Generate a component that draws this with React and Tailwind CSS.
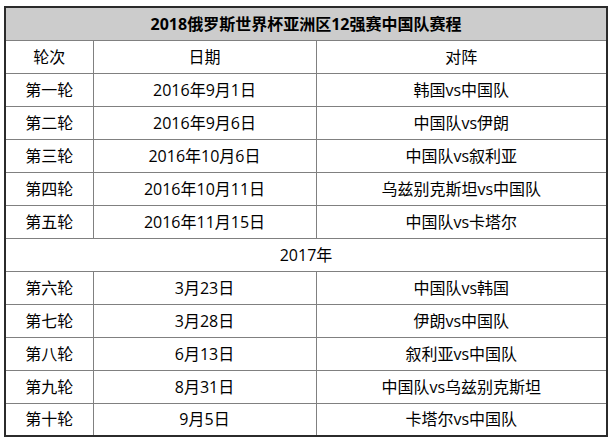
import React from "react";

const rounds1 = [
  ["第一轮", "2016年9月1日", "韩国vs中国队"],
  ["第二轮", "2016年9月6日", "中国队vs伊朗"],
  ["第三轮", "2016年10月6日", "中国队vs叙利亚"],
  ["第四轮", "2016年10月11日", "乌兹别克斯坦vs中国队"],
  ["第五轮", "2016年11月15日", "中国队vs卡塔尔"],
];

const rounds2 = [
  ["第六轮", "3月23日", "中国队vs韩国"],
  ["第七轮", "3月28日", "伊朗vs中国队"],
  ["第八轮", "6月13日", "叙利亚vs中国队"],
  ["第九轮", "8月31日", "中国队vs乌兹别克斯坦"],
  ["第十轮", "9月5日", "卡塔尔vs中国队"],
];

const cell = "border border-[#808080] h-[33px] p-0 text-center align-middle";

const Row = ({ r }) => (
  <tr>
    <td className={cell}>{r[0]}</td>
    <td className={cell}>{r[1]}</td>
    <td className={cell}>{r[2]}</td>
  </tr>
);

const App = () => {
  return (
    <div className="bg-white w-[614px] h-[441px] pt-[6px] pl-[4px]">
      <table
        className="border-collapse border-2 border-[#2b2b2b] text-[16px] leading-[20px] text-black table-fixed w-[602px]"
        style={{ fontFamily: '"Open Sans", "Noto Sans CJK SC", sans-serif' }}
      >
        <colgroup>
          <col className="w-[88px]" />
          <col className="w-[223px]" />
          <col className="w-[291px]" />
        </colgroup>
        <tbody>
          <tr>
            <td colSpan={3} className={cell + " bg-[#cccccc] font-bold"}>
              2018俄罗斯世界杯亚洲区12强赛中国队赛程
            </td>
          </tr>
          <tr>
            <td className={cell}>轮次</td>
            <td className={cell}>日期</td>
            <td className={cell}>对阵</td>
          </tr>
          {rounds1.map((r) => (
            <Row key={r[0]} r={r} />
          ))}
          <tr>
            <td colSpan={3} className={cell}>
              2017年
            </td>
          </tr>
          {rounds2.map((r) => (
            <Row key={r[0]} r={r} />
          ))}
        </tbody>
      </table>
    </div>
  );
};

export default App;
